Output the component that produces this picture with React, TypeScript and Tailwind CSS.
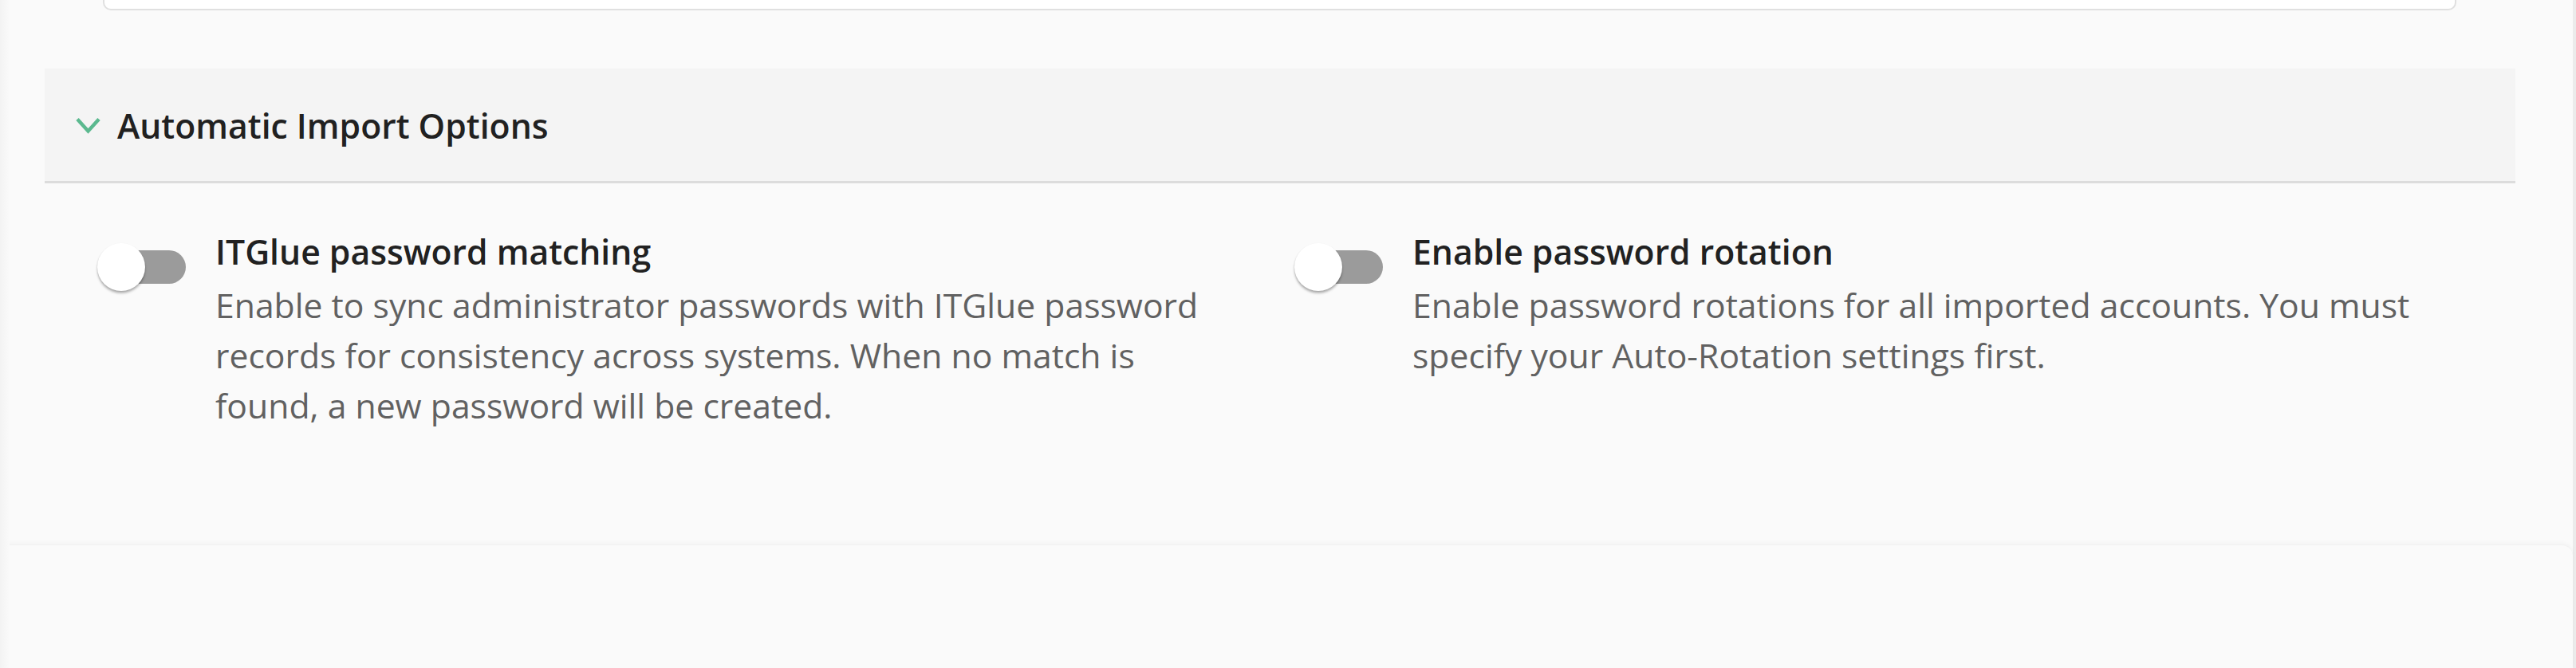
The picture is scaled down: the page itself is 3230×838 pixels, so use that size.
import React from "react";

function Toggle() {
  return (
    <div className="relative w-[111px] h-[60px] shrink-0">
      <div className="absolute left-[9px] top-[9px] w-[102px] h-[42px] rounded-full bg-[#9b9b9b]" />
      <div className="absolute left-0 top-0 w-[60px] h-[60px] rounded-full bg-white shadow-[0_3px_3px_rgba(0,0,0,0.25),0_1px_2px_rgba(0,0,0,0.12)]" />
    </div>
  );
}

function Option({ title, desc }: { title: string; desc: string }) {
  return (
    <div className="flex items-start">
      <div className="pt-[21px]">
        <Toggle />
      </div>
      <div className="ml-[37px] flex flex-col">
        <div className="text-[42.7px] leading-[63px] font-semibold text-[#212121]">{title}</div>
        <div className="mt-[4px] text-[42.7px] leading-[63px] text-[#616161]">{desc}</div>
      </div>
    </div>
  );
}

export default function App() {
  return (
    <div
      className="w-[3230px] h-[838px] bg-[#fafafa] flex overflow-hidden"
      style={{ fontFamily: '"Open Sans", "Noto Sans", sans-serif' }}
    >
      <div className="relative flex-1 flex flex-col">
        <div className="absolute left-0 top-0 bottom-0 w-[12px] bg-gradient-to-r from-[#f3f3f3] to-[#fafafa]" />
        <div className="h-[683px] flex flex-col">
          <div className="ml-[129px] w-[2951px] h-[13px] bg-white border-2 border-t-0 border-[#e0e0e0] rounded-b-[10px]" />
          <div className="ml-[56px] w-[3098px] mt-[73px] flex flex-col">
            <div className="h-[144px] bg-[#f4f4f4] border-b-[3px] border-[#dcdcdc] flex items-center pl-[39px]">
              <svg width="31" height="21" viewBox="0 0 31 21" className="shrink-0 mt-[2px]">
                <path d="M2 2.5 L15.5 17.5 L29 2.5" fill="none" stroke="#5bb98f" strokeWidth="4.5" />
              </svg>
              <span className="ml-[21px] mt-[4px] text-[42.7px] font-semibold text-[#212121] leading-none">
                Automatic Import Options
              </span>
            </div>
            <div className="pl-[66px] pt-[54px] grid grid-cols-[1501px_1fr]">
              <div className="pr-[120px]">
                <Option
                  title="ITGlue password matching"
                  desc="Enable to sync administrator passwords with ITGlue password records for consistency across systems. When no match is found, a new password will be created."
                />
              </div>
              <div className="pr-[40px]">
                <Option
                  title="Enable password rotation"
                  desc="Enable password rotations for all imported accounts. You must specify your Auto-Rotation settings first."
                />
              </div>
            </div>
          </div>
        </div>
        <div className="flex-1 rounded-t-[14px] bg-[#fafafa] border-t border-[#f1f1f1] shadow-[0_-2px_5px_rgba(0,0,0,0.03)]" />
      </div>
      <div className="w-[4px] bg-[#ebebeb]" />
    </div>
  );
}
